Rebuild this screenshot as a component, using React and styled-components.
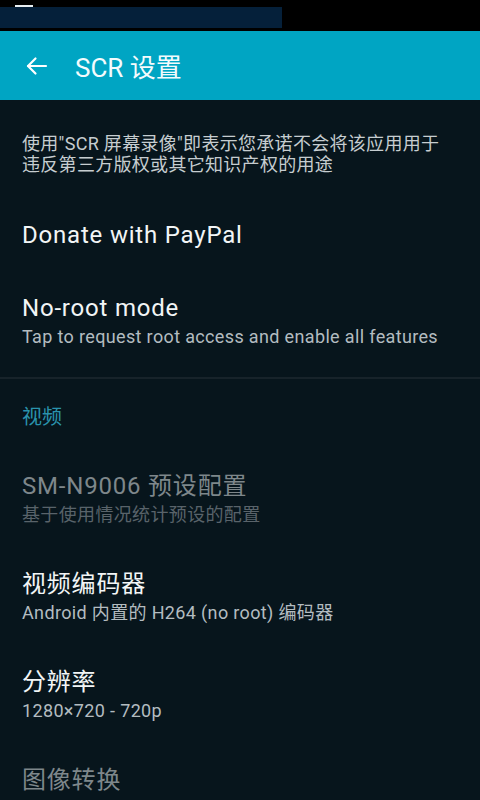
import React from "react";
import styled, { createGlobalStyle } from "styled-components";

const GlobalStyle = createGlobalStyle`
html, body {
    margin: 0;
    padding: 0;
    background: #07151c;
}
body {
    font-family: Roboto, "Noto Sans CJK SC", sans-serif;
    -webkit-font-smoothing: antialiased;
}
`;

const Screen = styled.div`
display: flex;
flex-direction: column;
width: 480px;
min-height: 800px;
background: #07151c;
overflow: hidden;
`;

const StatusBar = styled.div`
display: flex;
flex-direction: row;
align-items: flex-end;
height: 31px;
background: #000;
`;

const StatusNotice = styled.div`
position: relative;
width: 282px;
height: 21px;
margin-bottom: 3px;
background: #05203a;
`;

const StatusMark = styled.div`
position: absolute;
left: 15px;
top: -2px;
width: 18px;
height: 2px;
background: #e8eef2;
`;

const Toolbar = styled.div`
display: flex;
flex-direction: row;
align-items: center;
height: 69px;
padding: 0 0 0 25px;
background: #00a5c3;
`;

const BackButton = styled.button`
display: flex;
align-items: center;
justify-content: center;
padding: 0;
margin-right: 26px;
background: transparent;
border: none;
cursor: pointer;
`;

const ToolbarTitle = styled.h1`
margin: 0;
font-size: 26px;
font-weight: 400;
color: #f4fbfd;
`;

const Disclaimer = styled.p`
margin: 0;
padding: 33px 22px 24px;
font-size: 18px;
line-height: 21px;
letter-spacing: 0.3px;
color: #c6cdd0;
`;

const Item = styled.div`
display: flex;
flex-direction: column;
justify-content: center;
padding: ${props => props.single ? "21px 22px 23px" : "20px 22px"};
`;

const ItemTitle = styled.div`
font-size: 24px;
line-height: 30px;
letter-spacing: 0.8px;
color: ${props => props.disabled ? "#7e878b" : "#f2f5f6"};
`;

const ItemSummary = styled.div`
font-size: 18px;
line-height: 28px;
letter-spacing: 0.35px;
color: ${props => props.disabled ? "#59636a" : "#b3bcc0"};
`;

const Divider = styled.div`
height: 2px;
margin-top: 6px;
background: #17232a;
`;

const Category = styled.div`
padding: 24px 22px 20px;
font-size: 20px;
line-height: 28px;
color: #2a93ad;
`;

const BackArrow = () => (
    <svg width="24" height="24" viewBox="0 0 24 24" fill="none" stroke="#fff" strokeWidth="2.2" strokeLinecap="round" strokeLinejoin="round">
        <path d="M21 12H3" />
        <path d="M10.5 4.5L3 12l7.5 7.5" />
    </svg>
);

const Preference = ({ title, summary, disabled, single }) => (
    <Item single={single}>
        <ItemTitle disabled={disabled}>{title}</ItemTitle>
        {summary ? <ItemSummary disabled={disabled}>{summary}</ItemSummary> : null}
    </Item>
);

const App = () => {
    return (
        <Screen>
            <GlobalStyle />
            <StatusBar>
                <StatusNotice>
                    <StatusMark />
                </StatusNotice>
            </StatusBar>
            <Toolbar>
                <BackButton aria-label="返回">
                    <BackArrow />
                </BackButton>
                <ToolbarTitle>SCR 设置</ToolbarTitle>
            </Toolbar>
            <Disclaimer>
                使用"SCR 屏幕录像"即表示您承诺不会将该应用用于<br />违反第三方版权或其它知识产权的用途
            </Disclaimer>
            <Preference single title="Donate with PayPal" />
            <Preference title="No-root mode" summary="Tap to request root access and enable all features" />
            <Divider />
            <Category>视频</Category>
            <Preference disabled title="SM-N9006 预设配置" summary="基于使用情况统计预设的配置" />
            <Preference title="视频编码器" summary="Android 内置的 H264 (no root) 编码器" />
            <Preference title="分辨率" summary="1280×720 - 720p" />
            <Preference disabled title="图像转换" summary="" />
        </Screen>
    );
};

export default App;
